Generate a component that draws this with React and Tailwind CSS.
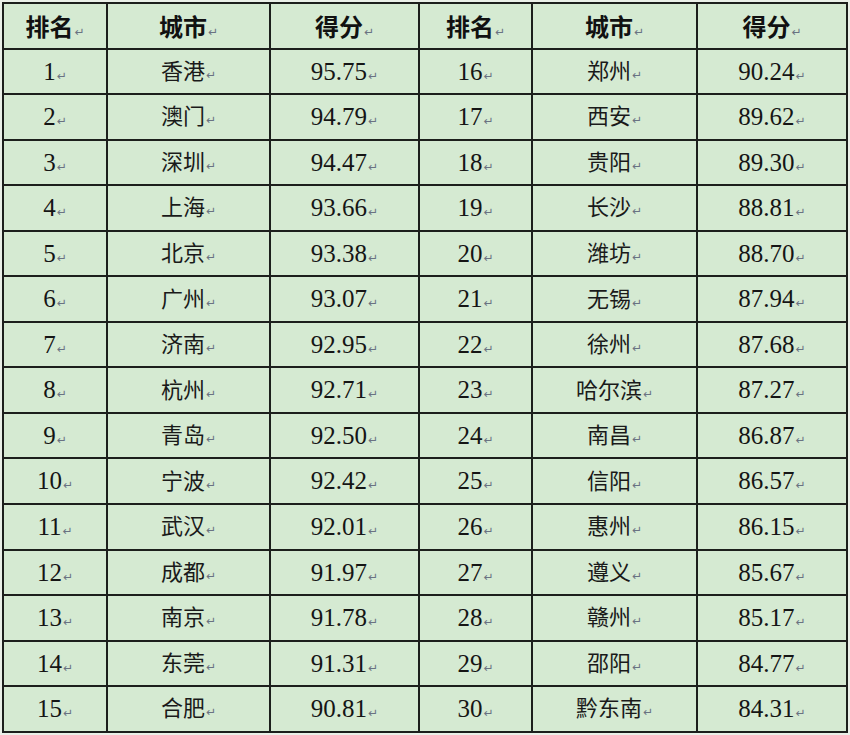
const left = [
  ["1", "香港", "95.75"], ["2", "澳门", "94.79"], ["3", "深圳", "94.47"], ["4", "上海", "93.66"],
  ["5", "北京", "93.38"], ["6", "广州", "93.07"], ["7", "济南", "92.95"], ["8", "杭州", "92.71"],
  ["9", "青岛", "92.50"], ["10", "宁波", "92.42"], ["11", "武汉", "92.01"], ["12", "成都", "91.97"],
  ["13", "南京", "91.78"], ["14", "东莞", "91.31"], ["15", "合肥", "90.81"],
]

const right = [
  ["16", "郑州", "90.24"], ["17", "西安", "89.62"], ["18", "贵阳", "89.30"], ["19", "长沙", "88.81"],
  ["20", "潍坊", "88.70"], ["21", "无锡", "87.94"], ["22", "徐州", "87.68"], ["23", "哈尔滨", "87.27"],
  ["24", "南昌", "86.87"], ["25", "信阳", "86.57"], ["26", "惠州", "86.15"], ["27", "遵义", "85.67"],
  ["28", "赣州", "85.17"], ["29", "邵阳", "84.77"], ["30", "黔东南", "84.31"],
]

const Mark = () => (
  <span className="text-[12px] text-gray-500 ml-[1px] font-['DejaVu_Sans',sans-serif] align-baseline">↵</span>
)

const Cell = ({children, head, num}) => (
  <td className="border-2 border-[#1c1f1c] text-center align-middle p-0 h-[45.56px]">
    <span
      className={
        head
          ? "text-[24px] font-bold text-[#111] font-['Noto_Sans_CJK_SC',sans-serif]"
          : num
            ? "text-[25px] text-[#151515] font-['Liberation_Serif',serif]"
            : "text-[22px] text-[#1a1a1a] font-['Liberation_Serif','Noto_Sans_CJK_SC',serif]"
      }
    >
      {children}
    </span>
    <Mark/>
  </td>
)

const App = () => {
  return (
    <div className="w-[850px] h-[735px] bg-[#eaf0e8] pl-[2px] pt-[2px] overflow-hidden">
      <table className="border-collapse bg-[#d5ead2] table-fixed w-[846px]">
        <colgroup>
          <col className="w-[104px]"/>
          <col className="w-[163px]"/>
          <col className="w-[149px]"/>
          <col className="w-[113px]"/>
          <col className="w-[165px]"/>
          <col className="w-[150px]"/>
        </colgroup>
        <thead>
          <tr>
            <Cell head>排名</Cell>
            <Cell head>城市</Cell>
            <Cell head>得分</Cell>
            <Cell head>排名</Cell>
            <Cell head>城市</Cell>
            <Cell head>得分</Cell>
          </tr>
        </thead>
        <tbody>
          {left.map((row, i) => (
            <tr key={row[0]}>
              <Cell num>{row[0]}</Cell>
              <Cell>{row[1]}</Cell>
              <Cell num>{row[2]}</Cell>
              <Cell num>{right[i][0]}</Cell>
              <Cell>{right[i][1]}</Cell>
              <Cell num>{right[i][2]}</Cell>
            </tr>
          ))}
        </tbody>
      </table>
    </div>
  )
}

export default App
